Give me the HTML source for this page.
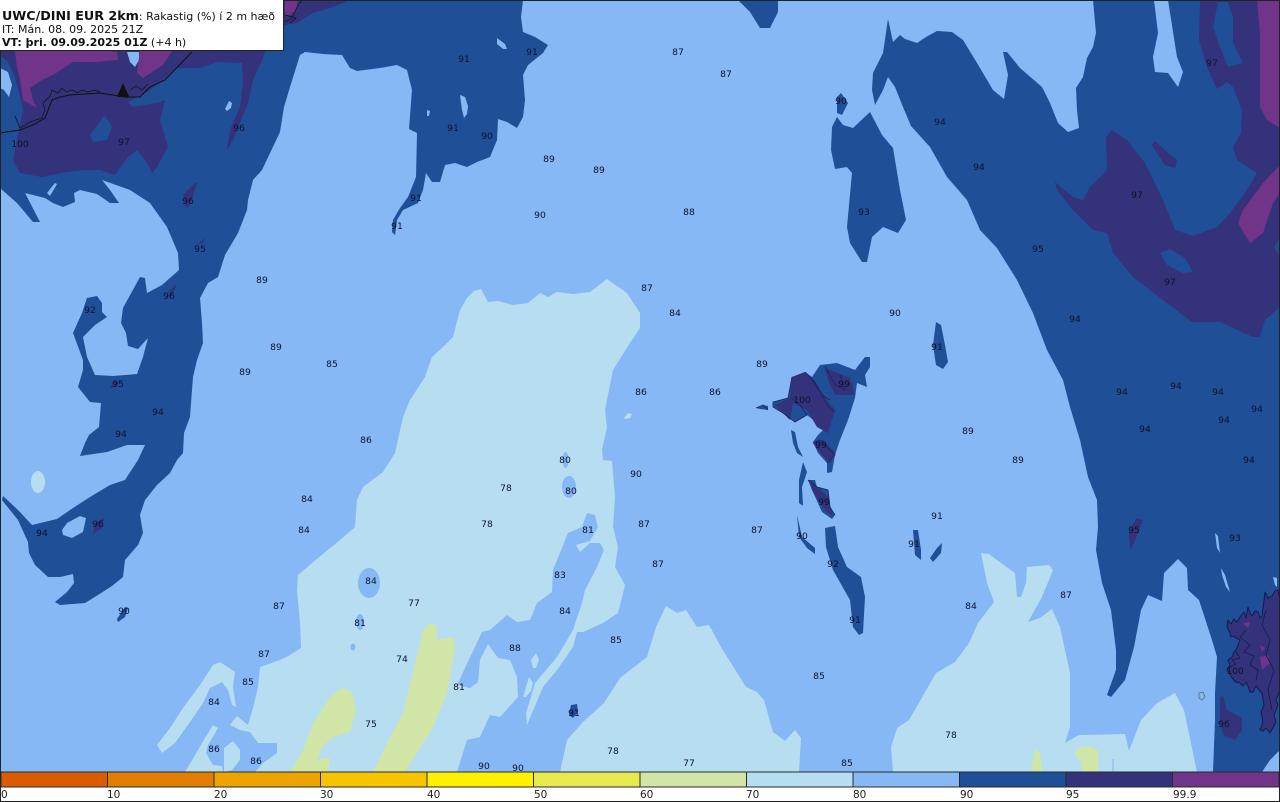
<!DOCTYPE html>
<html><head><meta charset="utf-8"><style>
html,body{margin:0;padding:0;width:1280px;height:802px;overflow:hidden;background:#fff}
svg{position:absolute;left:0;top:0;display:block}
.l text{font:9.2px "DejaVu Sans",sans-serif;fill:#0b1230;text-anchor:middle}
.c text{font:10.5px "DejaVu Sans",sans-serif;fill:#222}
#h{position:absolute;left:0;top:0;width:283px;height:50px;background:#fff;border-right:1px solid #222;border-bottom:1px solid #222;font:11px/13px "DejaVu Sans",sans-serif;color:#111;white-space:nowrap}
#h div{position:absolute;left:2px}
#h b.t{font-size:12.7px}
</style></head><body>
<svg width="1280" height="802" viewBox="0 0 1280 802" xmlns="http://www.w3.org/2000/svg">
<rect width="1280" height="772" fill="#85b8f4"/>
<!-- light -->
<g fill="#b7ddf1">
<polygon points="481,289 488,302 498,301 513,305 528,303 540,293 548,297 557,292 573,294 590,292 607,279 627,293 640,313 640,328 630,343 613,370 605,410 607,427 602,450 603,460 612,461 615,497 613,527 618,547 615,567 625,585 618,613 603,623 583,632 560,672 527,727 500,772 255,772 263,763 277,753 277,743 258,743 250,732 240,722 230,725 237,718 248,725 253,708 258,687 260,667 280,660 290,655 301,648 300,623 297,590 298,575 318,558 340,540 355,527 357,500 363,487 383,472 395,453 403,417 410,400 425,377 432,357 443,347 453,337 460,310 467,298 474,291"/>
<polygon points="157,745 170,728 183,708 200,685 213,665 220,662 235,672 233,687 236,707 232,705 228,690 222,682 210,688 203,703 190,722 175,743 162,753"/>
<polygon points="230,725 237,716 248,725 250,732 240,730"/>
<polygon points="185,772 195,755 205,738 213,725 218,728 208,745 206,753 213,765 222,766 223,772"/>
<polygon points="224,772 224,748 233,741 240,750 240,760 232,770"/>
<ellipse cx="38" cy="482" rx="7" ry="11"/>
</g>
<!-- medium carved from light -->
<g fill="#85b8f4">
<polygon points="457,685 470,688 478,682 480,660 488,644 498,658 510,660 517,677 518,697 500,717 490,715 480,737 467,740 457,772 565,772 567,747 583,722 604,703 620,678 640,640 603,624 583,632 577,632 573,647 557,670 543,687 527,725 526,713 530,700 535,683 557,657 573,630 582,603 585,590 597,567 604,550 600,543 590,543 580,552 576,545 590,541 598,527 595,515 587,513 582,527 568,533 553,570 552,592 537,603 530,620 517,622 507,615 490,630 482,632"/>
<ellipse cx="369" cy="583" rx="11" ry="15"/>
<ellipse cx="360" cy="622" rx="4" ry="8"/>
<ellipse cx="353" cy="647" rx="2.5" ry="3.5"/>
<ellipse cx="565.5" cy="460" rx="3" ry="8"/>
<ellipse cx="569" cy="487" rx="7" ry="11"/>
</g>
<g fill="#b7ddf1">
<polygon points="531,660 536,653 539,660 536,668 533,668"/>
<polygon points="523,697 529,677 533,683 531,691 526,697"/>
<polygon points="624,418 628,413 632,414 630,418 626,419"/>
<polygon points="666,606 677,613 686,610 697,627 709,625 721,647 746,687 757,692 764,700 773,732 785,741 795,730 801,738 799,772 560,772 567,740 583,722 604,703 620,678 647,657 656,627"/>
<polygon points="981,553 989,554 1001,563 1015,573 1017,597 1021,597 1026,583 1027,567 1049,565 1053,570 1042,597 1028,622 1040,618 1052,609 1060,627 1070,673 1070,727 1065,743 1079,735 1125,734 1129,751 1141,720 1157,703 1175,693 1184,710 1197,772 893,772 891,747 897,728 909,720 936,673 955,662 969,643 978,623 994,602 987,583"/>
</g>
<!-- green -->
<g fill="#d0e5a6">
<polygon points="430,623 436,625 437,640 453,637 455,647 447,693 433,727 405,772 373,772 387,743 403,713 415,663 423,630"/>
<polygon points="342,688 352,692 356,710 350,732 333,737 322,747 317,760 330,757 328,772 290,772 303,750 313,723 330,697"/>
<polygon points="1035,749 1040,753 1042,772 1031,772"/>
<polygon points="1088,746 1098,750 1098,772 1083,772 1081,762 1074,753 1079,748"/>
</g>
<rect x="1112.5" y="759" width="1" height="13" fill="#85b8f4"/>
<!-- dark -->
<g fill="#1f4f96">
<polygon points="0,0 523,0 521,17 523,32 535,37 548,45 543,53 528,65 523,75 525,100 523,117 517,128 507,122 498,119 497,140 490,157 477,162 467,167 455,163 445,165 440,182 432,182 426,173 423,190 418,203 403,210 397,220 395,235 392,232 393,220 400,208 408,197 416,177 417,133 409,129 412,90 407,70 397,65 380,68 357,71 350,68 342,55 323,54 305,52 300,55 290,87 284,107 280,132 262,170 253,180 248,200 247,210 238,233 225,255 218,277 208,283 200,298 202,323 203,343 197,360 193,377 191,403 190,417 184,433 183,453 177,460 170,473 157,485 145,500 140,515 143,533 138,545 125,560 123,577 112,586 98,595 85,603 60,605 55,602 67,592 74,583 73,574 60,577 48,577 35,565 29,553 28,542 18,520 2,500 3,496 18,510 32,525 57,519 73,508 90,497 110,485 125,480 138,460 145,445 127,445 107,452 80,456 85,443 89,435 99,427 101,403 90,402 78,387 83,370 83,360 73,333 82,313 87,298 97,296 102,303 102,312 107,317 95,325 83,337 87,357 95,375 113,376 137,374 143,357 148,338 138,349 128,346 126,333 121,323 123,308 140,277 145,278 147,293 162,285 179,270 178,253 167,227 150,203 130,190 102,180 110,190 119,203 110,203 97,194 80,190 74,193 75,202 63,207 53,203 45,198 25,193 40,222 33,222 17,203 0,188"/>
<polygon points="1093,0 1096,33 1093,47 1087,58 1083,77 1076,88 1077,110 1079,128 1068,132 1058,123 1050,103 1042,87 1020,68 1007,52 1003,52 1008,75 1004,99 993,90 977,63 963,40 952,32 937,31 926,37 917,43 905,39 900,35 893,42 888,19 883,53 873,73 872,90 875,105 883,90 888,77 895,87 903,107 911,126 930,147 947,177 967,200 980,230 997,248 1017,280 1033,313 1047,350 1063,380 1070,407 1080,440 1088,477 1097,500 1098,527 1096,550 1102,583 1111,610 1116,650 1116,670 1107,695 1111,697 1125,680 1134,647 1141,610 1148,595 1162,601 1164,573 1178,559 1187,568 1188,590 1199,600 1212,640 1217,657 1215,693 1215,720 1213,772 1262,772 1270,760 1280,750 1280,0"/>
<polygon points="738,0 750,12 760,28 770,28 778,12 778,0"/>
<polygon points="832,127 837,117 843,125 853,128 870,112 882,135 893,148 900,190 906,220 898,233 883,227 872,237 867,262 862,262 850,243 847,227 852,173 847,167 835,169 831,150"/>
<polygon points="837,97 841,93 848,103 842,115 837,113"/>
<polygon points="936,322 941,325 945,345 948,362 943,369 936,365 933,345"/>
<polygon points="913,530 918,530 921,550 921,560 915,555"/>
<polygon points="942,543 941,553 933,562 930,558 937,548"/>
<polygon points="117,619 125,607 128,608 125,617 118,622"/>
<polygon points="571,705 577,704 578,712 573,718 569,715"/>
<!-- faroe -->
<polygon points="820,365 837,363 855,370 865,357 870,357 870,367 865,375 867,387 857,383 855,398 848,420 840,440 835,455 832,472 827,473 827,463 818,453 813,442 818,435 823,430 817,423 807,415 795,422 783,413 773,407 773,402 788,398 792,377 805,372 812,377"/>
<polygon points="791,430 795,432 798,447 803,457 797,453 793,443"/>
<polygon points="803,462 807,472 802,487 803,506 799,503 799,480"/>
<polygon points="808,480 815,480 817,487 828,490 830,507 835,515 832,519 822,512 812,490"/>
<polygon points="797,515 802,537 815,548 815,554 807,548 799,537"/>
<polygon points="825,528 835,526 838,547 847,567 861,577 865,597 863,633 859,635 853,627 850,600 833,570 826,547"/>
<polygon points="756,408 763,405 768,406 768,410 760,409"/>
</g>
<!-- holes in dark -->
<g fill="#85b8f4">
<polygon points="47,193 55,183 57,184 50,196"/>
<polygon points="62,530 67,523 80,516 86,518 83,532 72,538 63,535"/>
<polygon points="497,38 505,44 507,49 503,49 497,44"/>
<polygon points="460,95 465,97 468,106 467,114 464,118 462,110"/>
<polygon points="427,110 430,111 429,116 427,116"/>
<polygon points="225,109 229,101 232,103 231,108 227,111"/>
<polygon points="1154,0 1158,33 1153,57 1155,72 1168,73 1178,87 1183,72 1177,57 1168,0"/>
<polygon points="1215,533 1218,536 1220,553 1217,548"/>
<polygon points="1221,568 1225,575 1230,592 1226,587 1222,575"/>
<polygon points="1273,577 1277,578 1277,587 1275,585"/>
<polygon points="0,68 8,72 12,85 9,97 4,90 0,88"/>
</g>
<!-- indigo -->
<g fill="#33327a">
<polygon points="350,0 343,3 330,8 313,13 297,23 285,25 265,52 262,60 253,80 248,103 233,140 227,150 230,130 240,107 243,83 242,63 217,62 200,68 177,68 163,80 150,90 138,97 128,102 133,107 157,103 165,100 160,120 168,147 157,167 152,173 147,163 137,150 128,157 115,175 100,170 83,170 67,172 42,177 20,173 13,160 23,110 20,97 15,77 8,62 0,55 0,0"/>
<polygon points="1200,0 1199,40 1207,67 1217,89 1227,82 1233,87 1242,110 1241,133 1233,147 1237,160 1257,173 1247,190 1230,213 1217,227 1193,236 1175,230 1163,200 1145,163 1127,140 1112,130 1106,137 1107,170 1090,187 1083,200 1073,197 1055,182 1057,190 1073,210 1093,230 1107,233 1113,253 1133,277 1163,300 1192,322 1220,322 1253,337 1260,337 1265,320 1280,307 1280,0"/>
<polygon points="1152,145 1155,141 1167,152 1177,160 1175,168 1165,165 1157,153"/>
<polygon points="183,195 195,183 197,183 190,205 186,208"/>
<polygon points="197,245 205,238 203,243"/>
<polygon points="168,292 177,284 172,296"/>
<polygon points="110,388 115,380 120,383 113,388"/>
<polygon points="93,534 95,523 104,518 102,528"/>
<polygon points="1129,530 1137,518 1143,520 1138,533 1131,550 1129,540"/>
<polygon points="1220,697 1223,696 1227,710 1242,718 1242,730 1235,740 1223,735 1220,723"/>
<polygon points="792,377 805,372 815,382 827,400 835,410 828,433 817,427 807,410 793,403 790,420 775,405 790,398"/>
<polygon points="825,368 850,378 855,395 848,395 835,395 828,380"/>
<polygon points="813,443 823,440 835,453 830,463 820,453"/>
<polygon points="810,480 828,497 833,517 825,510 812,490"/>
</g>
<!-- holes in indigo -->
<g fill="#1f4f96">
<polygon points="90,135 105,115 112,127 107,140 93,142"/>
<polygon points="1218,2 1228,2 1233,17 1233,43 1243,63 1228,67 1220,47 1213,27"/>
<polygon points="1160,253 1170,249 1185,258 1193,272 1183,273 1167,265"/>
<polygon points="1280,238 1274,247 1280,256"/>
</g>
<polygon points="127,52 130,62 135,67 139,60 139,52" fill="#85b8f4"/>
<!-- purple -->
<g fill="#703589">
<polygon points="15,52 17,67 20,80 23,100 37,108 33,100 30,88 42,80 53,75 73,62 97,62 118,60 117,52 15,40"/>
<polygon points="140,50 137,73 143,78 163,65 173,50"/>
<polygon points="285,0 298,0 296,10 290,15 285,15"/>
<polygon points="1257,0 1260,33 1260,107 1267,120 1280,128 1280,0"/>
<polygon points="1280,165 1263,183 1243,210 1238,223 1250,243 1263,233 1273,203 1280,193"/>
</g>
<!-- shetland -->
<polygon points="1228,620 1231,624 1234,619 1237,622 1240,617 1244,612 1246,618 1248,607 1250,613 1252,616 1255,611 1258,612 1260,618 1262,616 1265,592 1268,598 1272,596 1275,591 1278,590 1280,600 1280,690 1276,700 1278,705 1274,715 1276,722 1270,733 1266,728 1263,731 1260,730 1263,722 1261,712 1264,705 1262,693 1259,690 1256,686 1253,692 1250,692 1248,686 1246,682 1243,686 1240,683 1236,682 1232,678 1230,674 1227,670 1230,665 1228,660 1232,657 1234,652 1236,650 1238,645 1240,640 1236,638 1234,636 1231,637 1230,633 1227,627" fill="#33327a" stroke="#141a50" stroke-width="1" stroke-linejoin="round"/>
<g fill="#703589">
<polygon points="1243,623 1250,622 1248,628"/>
<polygon points="1260,645 1265,648 1262,652"/>
<polygon points="1260,657 1268,655 1270,663 1262,670"/>
</g>
<g fill="none" stroke="#141a50" stroke-width=".8">
<polyline points="1246,630 1240,637 1250,645 1244,652 1254,656 1250,665 1258,670 1256,680"/>
<polyline points="1266,610 1262,625 1270,640 1266,655 1274,670 1268,690 1272,710"/>
<polyline points="1228,668 1236,664 1232,660 1240,658 1236,652"/>
<polyline stroke="#5a6a80" points="1199,693 1203,692 1205,697 1202,700 1199,698 1199,693"/>
<!-- faroe coast -->
<polyline stroke="#1a2560" points="792,377 788,398 773,402 773,407 783,413 795,422 807,415 800,405 790,397"/>
<polyline stroke="#1a2560" points="805,372 815,382 827,405 835,412"/>
<polyline stroke="#1a2560" points="825,366 835,385 845,390 840,375"/>
<polyline stroke="#1a2560" points="812,380 822,395 830,400"/>
<polyline stroke="#1a2560" points="813,443 820,440 835,455 827,463"/>
<polyline stroke="#1a2560" points="808,480 817,487 828,490 830,507 835,515"/>
<polyline stroke="#1a2560" points="756,408 763,405 768,410"/>
<!-- iceland coast -->
<polyline stroke="#111" stroke-width="1" points="0,133 20,130 35,124 45,118 52,100 60,97 70,95 85,94 100,93 125,97 140,97 150,87 165,80 192,52"/>
<polyline stroke="#111" stroke-width=".7" points="15,116 20,128 30,122 42,118 45,110 43,103 50,96 52,90 58,93 62,88 66,92 72,90 78,93 82,90 88,92 94,90 100,92"/>
<polyline stroke="#111" stroke-width=".7" points="130,90 136,86 142,90 148,84"/>
<polyline stroke="#111" stroke-width=".7" points="285,22 292,18 298,5 302,0"/>
<polyline stroke="#111" stroke-width=".7" points="285,15 296,18 290,23"/>
</g>
<polygon points="117,96 120,90 123,83 126,90 129,96 128,97 118,97" fill="#111"/>
<!-- labels -->
<g class="l">
<text x="20" y="147">100</text><text x="124" y="145">97</text><text x="239" y="131">96</text><text x="464" y="62">91</text><text x="532" y="55">91</text><text x="678" y="55">87</text><text x="726" y="77">87</text><text x="841" y="104">90</text><text x="1212" y="66">97</text><text x="940" y="125">94</text><text x="453" y="131">91</text><text x="487" y="139">90</text><text x="549" y="162">89</text><text x="599" y="173">89</text><text x="979" y="170">94</text><text x="188" y="204">96</text><text x="416" y="201">91</text><text x="397" y="229">91</text><text x="540" y="218">90</text><text x="689" y="215">88</text><text x="864" y="215">93</text><text x="1137" y="198">97</text><text x="200" y="252">95</text><text x="1038" y="252">95</text><text x="262" y="283">89</text><text x="1170" y="285">97</text><text x="647" y="291">87</text><text x="169" y="299">96</text><text x="90" y="313">92</text><text x="675" y="316">84</text><text x="895" y="316">90</text><text x="1075" y="322">94</text><text x="276" y="350">89</text><text x="937" y="350">91</text><text x="332" y="367">85</text><text x="762" y="367">89</text><text x="245" y="375">89</text><text x="118" y="387">95</text><text x="844" y="387">99</text><text x="1176" y="389">94</text><text x="641" y="395">86</text><text x="715" y="395">86</text><text x="1122" y="395">94</text><text x="1218" y="395">94</text><text x="802" y="403">100</text><text x="1257" y="412">94</text><text x="158" y="415">94</text><text x="1224" y="423">94</text><text x="1145" y="432">94</text><text x="968" y="434">89</text><text x="121" y="437">94</text><text x="366" y="443">86</text><text x="821" y="448">99</text><text x="565" y="463">80</text><text x="1018" y="463">89</text><text x="1249" y="463">94</text><text x="636" y="477">90</text><text x="506" y="491">78</text><text x="571" y="494">80</text><text x="307" y="502">84</text><text x="824" y="505">99</text><text x="937" y="519">91</text><text x="487" y="527">78</text><text x="644" y="527">87</text><text x="98" y="527">96</text><text x="304" y="533">84</text><text x="588" y="533">81</text><text x="757" y="533">87</text><text x="1134" y="533">95</text><text x="42" y="536">94</text><text x="802" y="539">90</text><text x="1235" y="541">93</text><text x="914" y="547">91</text><text x="833" y="567">92</text><text x="658" y="567">87</text><text x="560" y="578">83</text><text x="371" y="584">84</text><text x="1066" y="598">87</text><text x="414" y="606">77</text><text x="971" y="609">84</text><text x="279" y="609">87</text><text x="565" y="614">84</text><text x="124" y="614">90</text><text x="855" y="623">91</text><text x="360" y="626">81</text><text x="616" y="643">85</text><text x="515" y="651">88</text><text x="264" y="657">87</text><text x="402" y="662">74</text><text x="1235" y="674">100</text><text x="819" y="679">85</text><text x="248" y="685">85</text><text x="459" y="690">81</text><text x="214" y="705">84</text><text x="574" y="716">91</text><text x="1224" y="727">96</text><text x="371" y="727">75</text><text x="951" y="738">78</text><text x="214" y="752">86</text><text x="613" y="754">78</text><text x="256" y="764">86</text><text x="847" y="766">85</text><text x="689" y="766">77</text><text x="484" y="769">90</text><text x="518" y="771">90</text>
</g>
<!-- colorbar -->
<g stroke="#2a2a2a" stroke-width="1">
<rect x="1" y="772" width="106.5" height="15" fill="#d95c00"/>
<rect x="107.5" y="772" width="106.5" height="15" fill="#e17d00"/>
<rect x="214" y="772" width="106.5" height="15" fill="#eda400"/>
<rect x="320.5" y="772" width="106.5" height="15" fill="#f6c500"/>
<rect x="427" y="772" width="106.5" height="15" fill="#fff000"/>
<rect x="533.5" y="772" width="106.5" height="15" fill="#e8e84f"/>
<rect x="640" y="772" width="106.5" height="15" fill="#d0e5a6"/>
<rect x="746.5" y="772" width="106.5" height="15" fill="#b7ddf1"/>
<rect x="853" y="772" width="106.5" height="15" fill="#85b8f4"/>
<rect x="959.5" y="772" width="106.5" height="15" fill="#1f4f96"/>
<rect x="1066" y="772" width="106.5" height="15" fill="#33327a"/>
<rect x="1172.5" y="772" width="106.5" height="15" fill="#703589"/>
</g>
<g class="c">
<text x="1" y="798">0</text><text x="107" y="798">10</text><text x="214" y="798">20</text><text x="320" y="798">30</text><text x="427" y="798">40</text><text x="534" y="798">50</text><text x="640" y="798">60</text><text x="746" y="798">70</text><text x="853" y="798">80</text><text x="960" y="798">90</text><text x="1066" y="798">95</text><text x="1173" y="798">99.9</text>
</g>
<rect x=".5" y=".5" width="1279" height="801" fill="none" stroke="#222" stroke-width="1"/>
</svg>
<div id="h">
<div style="top:9px"><b class="t">UWC/DINI EUR 2km</b>: Rakastig (%) í 2 m hæð</div>
<div style="top:23px">IT: Mán. 08. 09. 2025 21Z</div>
<div style="top:36px"><b>VT: þri. 09.09.2025 01Z</b> (+4 h)</div>
</div>
</body></html>
